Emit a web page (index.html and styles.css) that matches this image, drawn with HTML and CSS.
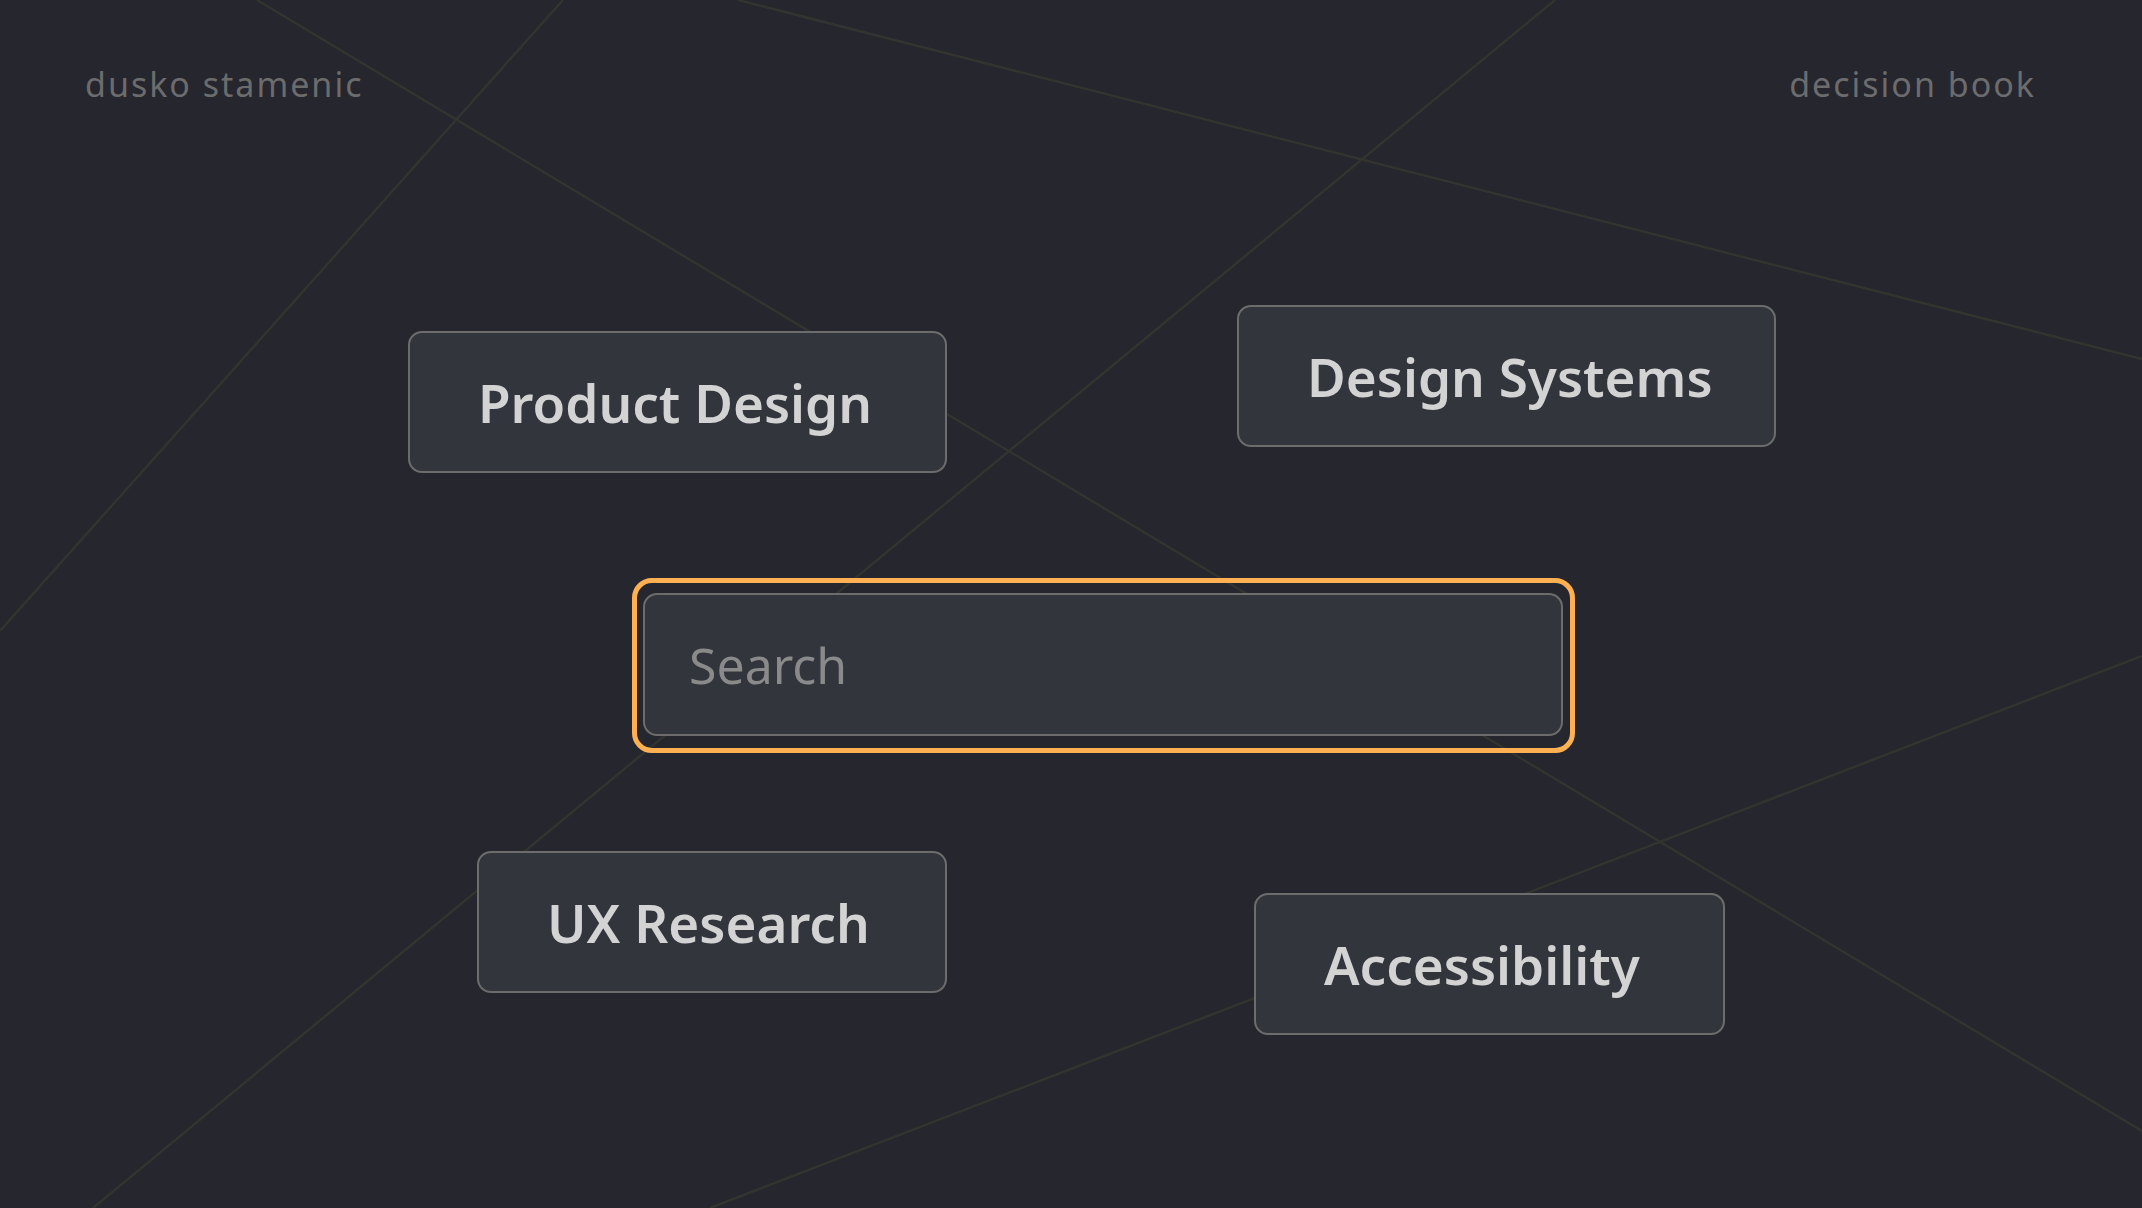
FILE: index.html
```html
<!DOCTYPE html>
<html lang="en">
<head>
    <meta charset="UTF-8">
    <meta name="viewport" content="width=device-width, initial-scale=1.0">
    <title>decision book</title>
    <link rel="stylesheet" href="styles.css">
</head>
<body>
    <!-- decorative lines behind everything -->
    <svg class="backdrop" viewBox="0 0 2142 1208" preserveAspectRatio="none">
        <line x1="257" y1="0" x2="2142" y2="1131" />
        <line x1="563" y1="0" x2="0" y2="631" />
        <line x1="1555" y1="0" x2="93" y2="1208" />
        <line x1="738" y1="0" x2="2142" y2="359" />
        <line x1="2142" y1="656" x2="710" y2="1208" />
    </svg>

    <header id="topBar">
        <span class="brand">dusko stamenic</span>
        <span class="brand">decision book</span>
    </header>

    <main id="board">
        <div class="row row-top">
            <div class="tag tag-product">Product Design</div>
            <div class="tag tag-systems">Design Systems</div>
        </div>

        <div class="row row-search">
            <div class="search-ring">
                <input type="text" id="searchInput" class="search" placeholder="Search">
            </div>
        </div>

        <div class="row row-bottom">
            <div class="tag tag-research">UX Research</div>
            <div class="tag tag-access">Accessibility</div>
        </div>
    </main>
</body>
</html>
```

FILE: styles.css
```css
html, body {
    margin: 0;
    height: 100%;
}

body {
    position: relative;
    overflow: hidden;
    background-color: #25262e;
    font-family: "Noto Sans", "Open Sans", sans-serif;
}

.backdrop {
    position: absolute;
    top: 0;
    left: 0;
    width: 100%;
    height: 100%;
    z-index: 0;
}

.backdrop line {
    stroke: #33332f;
    stroke-width: 2.5;
}

#topBar {
    position: relative;
    z-index: 1;
    display: flex;
    justify-content: space-between;
    padding: 67px 106px 0 85px;
}

.brand {
    font-size: 34px;
    line-height: 1;
    letter-spacing: 2px;
    color: #6c6c6c;
}

#board {
    position: relative;
    z-index: 1;
}

.row {
    display: flex;
    align-items: flex-start;
}

.row-top {
    margin-top: 204px;
    padding-left: 408px;
    gap: 290px;
}

.row-search {
    margin-top: 105px;
    padding-left: 632px;
}

.row-bottom {
    margin-top: 98px;
    padding-left: 477px;
    gap: 307px;
}

.tag {
    box-sizing: border-box;
    display: flex;
    align-items: center;
    height: 142px;
    padding-left: 68px;
    background-color: #33353d;
    border: 2px solid #6c6c6c;
    border-radius: 14px;
    color: #d3d3d3;
    font-size: 53px;
    font-weight: 600;
    line-height: 1;
}

.tag-product {
    width: 539px;
    margin-top: 26px;
}

.tag-systems {
    width: 539px;
}

.tag-research {
    width: 470px;
}

.tag-access {
    width: 471px;
    margin-top: 42px;
}

.search-ring {
    padding: 10px 7px 12px 6px;
    border: 5px solid #ffb053;
    border-radius: 20px;
}

.search {
    box-sizing: border-box;
    display: block;
    width: 920px;
    height: 143px;
    margin: 0;
    padding: 0 0 0 44px;
    background-color: #33353d;
    border: 2px solid #6c6c6c;
    border-radius: 14px;
    outline: none;
    color: #d3d3d3;
    font-family: "Noto Sans", "Open Sans", sans-serif;
    font-size: 50px;
}

.search::placeholder {
    color: #8a8a8a;
}
```
